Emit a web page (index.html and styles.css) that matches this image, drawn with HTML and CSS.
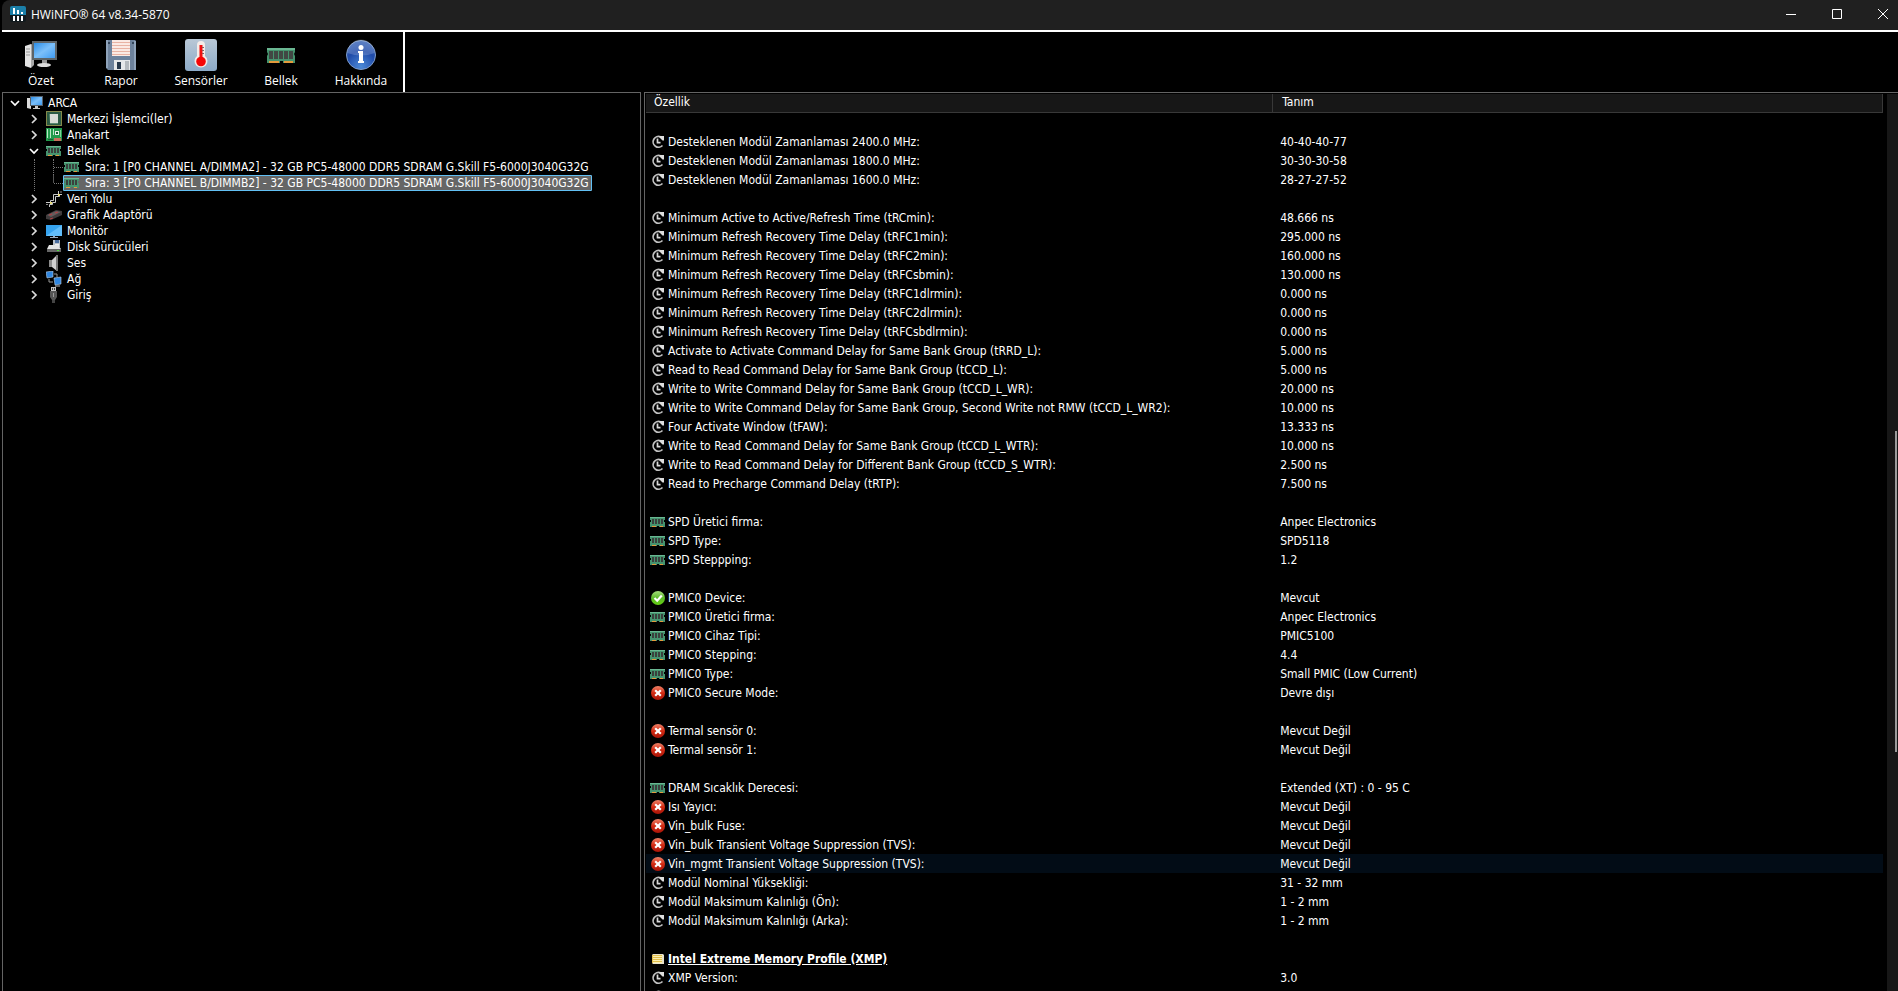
FILE: index.html
```
<!DOCTYPE html>
<html lang="tr">

<head>
    <meta charset="UTF-8">
    <meta name="viewport" content="width=device-width, initial-scale=1.0">
    <title>HWiNFO® 64 v8.34-5870</title>
    <link rel="stylesheet" href="styles.css">
</head>

<body>
    <!-- shared icons -->
    <svg class="sprite" aria-hidden="true">
        <defs>
            <linearGradient id="screen" x1="0" y1="0" x2="1" y2="1">
                <stop offset="0" stop-color="#2b8ee8" />
                <stop offset="0.5" stop-color="#7cc0fa" />
                <stop offset="1" stop-color="#3f9cf2" />
            </linearGradient>
            <linearGradient id="steel" x1="0" y1="0" x2="0" y2="1">
                <stop offset="0" stop-color="#b9c8d6" />
                <stop offset="1" stop-color="#8dabc8" />
            </linearGradient>
            <radialGradient id="blue" cx="0.5" cy="0.9" r="0.9">
                <stop offset="0" stop-color="#4c8ad8" />
                <stop offset="0.6" stop-color="#1f4aa8" />
                <stop offset="1" stop-color="#3a66b8" />
            </radialGradient>
            <linearGradient id="green" x1="0" y1="0" x2="0" y2="1">
                <stop offset="0" stop-color="#a5dc7c" />
                <stop offset="0.5" stop-color="#5cb82a" />
                <stop offset="1" stop-color="#63d010" />
            </linearGradient>
            <linearGradient id="red" x1="0" y1="0" x2="0" y2="1">
                <stop offset="0" stop-color="#ee8268" />
                <stop offset="0.5" stop-color="#d32a12" />
                <stop offset="1" stop-color="#a81408" />
            </linearGradient>
        </defs>
        <symbol id="i-pc" viewBox="0 0 32 32">
            <path d="M0 7l6-2v24l-6-2z" fill="#e4e4e4" />
            <path d="M6 5l3 1v20l-3 3z" fill="#a8a8a8" />
            <path d="M1 10h4M1 13h4M1 16h4" stroke="#999" />
            <path d="M7 2h25v19H7z" fill="#5d6468" />
            <path d="M9 4h21v15H9z" fill="url(#screen)" />
            <path d="M17 21h5v4h-5z" fill="#999" />
            <ellipse cx="19" cy="26" rx="7" ry="2" fill="#dcdcdc" />
        </symbol>
        <symbol id="i-pc-small" viewBox="0 0 16 16">
            <path d="M0 3h4v11l-4-1z" fill="#dcdcdc" />
            <path d="M3 1h13v10H3z" fill="#56606a" />
            <path d="M4 2h11v8H4z" fill="url(#screen)" />
            <path d="M8 11h3v2h2v1H6v-1h2z" fill="#c8c8c8" />
        </symbol>
        <symbol id="i-cpu" viewBox="0 0 16 16">
            <path d="M0 0h16v15H0z" fill="#2b5a44" />
            <path d="M.5 .5h15v14H.5z" fill="none" stroke="#e0b850" stroke-dasharray="1 1" />
            <path d="M4 3h8v9H4z" fill="#d8dcd6" />
            <path d="M3 3h1v10h8v-1H4z" fill="#5b8a70" />
        </symbol>
        <symbol id="i-board" viewBox="0 0 16 16">
            <path d="M0 1h16v13H0z" fill="#239a4c" />
            <path d="M1 2h1v9H1zM4 2h1v9H4zM7 2h1v6H7z" fill="#b8e6c4" />
            <path d="M9 4h4v4H9z" fill="#e4ece4" />
            <path d="M10 5h2v2h-2zM2 12h5v1H2z" fill="#1b5e34" />
            <path d="M14 3h1v7h-1z" fill="#7bd898" />
            <path d="M8 11h7v3H8z" fill="#c9705c" />
        </symbol>
        <symbol id="i-ram" viewBox="0 0 32 22">
            <path d="M2 4h28v4l-1 2 1 2v7H18v-2h-3v2H2v-7l1-2-1-2z" fill="#45936e" />
            <path d="M2 4h28v2H2z" fill="#6ab792" />
            <path d="M4 7h4v8H4zM9 7h4v8H9zM14 7h4v8h-4zM19 7h4v8h-4zM24 7h4v8h-4z" fill="#414744" />
            <path d="M4 17h10v2H4zM19 17h9v2h-9z" fill="#e39a3c" />
        </symbol>
        <symbol id="i-ram-small" viewBox="0 0 16 16">
            <path d="M0 3h15v3H14v2h1v5H9v-1H7v1H0V8h1V6H0z" fill="#45936e" />
            <path d="M0 3h15v1H0z" fill="#6ab792" />
            <path d="M2 5h2v5H2zM5 5h2v5H5zM8 5h2v5H8zM11 5h2v5h-2z" fill="#3a403d" />
            <path d="M2 12h4v1H2zM10 12h3v1h-3z" fill="#e39a3c" />
        </symbol>
        <symbol id="i-bus" viewBox="0 0 16 16">
            <path d="M0 11.500h4.500V9.500h3v-6h5V0M3.500 16v-2.500h3v-2h3v-6h4v-2H16" fill="none" stroke="#c9c9c9" />
            <path d="M0 13.500h2M15 0v2" stroke="#888" />
            <path d="M4 11h2v2H4zM12 3h2v2h-2z" fill="#e8dc7c" />
        </symbol>
        <symbol id="i-gpu" viewBox="0 0 16 16">
            <path d="M0 8l10-5 6 1v4L5 13l-5-1z" fill="#3e3a3b" />
            <path d="M1 8l9-4 5 1-10 5z" fill="#655b5c" />
            <path d="M3 8l3-1M9 6l3-1M4 12l3-1" stroke="#b53c40" />
        </symbol>
        <symbol id="i-monitor" viewBox="0 0 16 16">
            <path d="M0 2h16v11H0z" fill="#36a4f0" />
            <path d="M0 13L16 2v11z" fill="#62bdf9" />
            <path d="M7 13h2v1h3v1H4v-1h3z" fill="#9ab" />
        </symbol>
        <symbol id="i-disk" viewBox="0 0 16 16">
            <path d="M7 1h7v7H7z" fill="#b9c0c8" />
            <path d="M9 1h4v3H9z" fill="#4b6ea0" />
            <path d="M9 5h4v3H9z" fill="#eee" />
            <path d="M3 6h9l3 4H1z" fill="#e4e4e4" />
            <path d="M1 10h14v3H1z" fill="#666" />
            <path d="M11 11h2v1h-2z" fill="#4be03c" />
        </symbol>
        <symbol id="i-sound" viewBox="0 0 16 16">
            <path d="M3 5h3v7H3z" fill="#8d8d8d" />
            <path d="M6 5l5-5v16l-5-4z" fill="#cfcfcf" />
            <path d="M10 0h2v16h-2z" fill="#777" />
        </symbol>
        <symbol id="i-net" viewBox="0 0 16 16">
            <path d="M0 1l7-1v6L1 7z" fill="#2f86e0" stroke="#b8cfe4" stroke-width=".6" />
            <path d="M3 8v3h4M8 3h3v3" fill="none" stroke="#999" />
            <path d="M8 7l7-1v7l-6 1z" fill="#2f86e0" stroke="#b8cfe4" stroke-width=".6" />
            <path d="M9 15h5" stroke="#bbb" />
        </symbol>
        <symbol id="i-input" viewBox="0 0 16 16">
            <path d="M5 0h5v4H5z" fill="#c4c4c4" />
            <path d="M6 1h1v2H6zM8 1h1v2H8z" fill="#444" />
            <path d="M4 4h7v6l-2 3H6l-2-3z" fill="#555" />
            <path d="M7 6h1v4H7z" fill="#999" />
            <path d="M6 13h3v3H6z" fill="#444" />
        </symbol>
        <symbol id="i-clock" viewBox="0 0 16 16">
            <path d="M10.500 2.800A5.400 5.400 0 1 0 12.500 11.500" fill="none" stroke="#c2c2c2" stroke-width="1.700" />
            <path d="M9.500 2H14v4.500h-1.500L9.500 3.500z" fill="#dedede" />
            <path d="M7.500 4.500v4.200h3" fill="none" stroke="#d8d8d8" stroke-width="1.700" />
        </symbol>
        <symbol id="i-ok" viewBox="0 0 16 16">
            <circle cx="8" cy="8" r="7" fill="url(#green)" />
            <path d="M4.500 8l2.700 2.700L11.800 5.500" fill="none" stroke="#fff" stroke-width="2.200" />
        </symbol>
        <symbol id="i-no" viewBox="0 0 16 16">
            <circle cx="8" cy="8" r="7" fill="url(#red)" />
            <path d="M5.200 5.200l5.600 5.600M10.800 5.200l-5.600 5.600" stroke="#fff" stroke-width="2.200" />
        </symbol>
        <symbol id="i-note" viewBox="0 0 16 16">
            <path d="M3 3h10l1 1v9H3l-1-1V4z" fill="#e8e2cc" />
            <path d="M2 4h10v8H2z" fill="#e2bf4c" />
            <path d="M3 5.500h9M3 7.500h9M3 9.500h9M3 11.500h9" stroke="#fbf0b4" />
        </symbol>
        <symbol id="i-open" viewBox="0 0 10 10">
            <path d="M1 3l4 4 4-4" fill="none" stroke="#fff" stroke-width="1.700" />
        </symbol>
        <symbol id="i-closed" viewBox="0 0 10 10">
            <path d="M3 1l4 4-4 4" fill="none" stroke="#dcdcdc" stroke-width="1.700" />
        </symbol>
    </svg>

    <div class="window">
        <header class="titlebar">
            <svg class="logo" viewBox="0 0 16 16" aria-hidden="true">
                <path d="M2 0h12q2 0 2 2v7H0V2q0-2 2-2z" fill="#1b7fa8" />
                <path d="M0 9h16v5q0 2-2 2H2q-2 0-2-2z" fill="#10191d" />
                <path d="M3 2h2v6H3zM7 4h2v4H7zM11 6h2v2h-2z" fill="#fff" />
                <path d="M3 10h2v5H3zM7 10h2v5H7zM11 10h2v5h-2z" fill="#fff" />
            </svg>
            <h1>HWiNFO® 64 v8.34-5870</h1>
            <div class="controls">
                <button type="button" aria-label="Simge durumuna küçült">
                    <svg viewBox="0 0 10 10"><path d="M0 5.500h10" /></svg>
                </button>
                <button type="button" aria-label="Ekranı kapla">
                    <svg viewBox="0 0 10 10"><path d="M.5 .5h9v9h-9z" /></svg>
                </button>
                <button type="button" aria-label="Kapat">
                    <svg viewBox="0 0 10 10"><path d="M0 0l10 10M10 0L0 10" /></svg>
                </button>
            </div>
        </header>

        <nav class="toolbar">
            <button type="button">
                <svg><use href="#i-pc" /></svg>
                <span>Özet</span>
            </button>
            <button type="button">
                <svg viewBox="0 0 32 32">
                    <path d="M1 1h29l1 1v29H3l-2-2z" fill="#6d829c" />
                    <path d="M1 1h2v28H1zM29 2h2v29h-2z" fill="#8fa3ba" />
                    <path d="M7 1h18v16H7z" fill="#fbeae4" />
                    <path d="M7 3.500h18M7 6.500h18M7 9.500h18M7 12.500h18M7 15.500h18" stroke="#e9b3a4" />
                    <path d="M9 21h16v10H9z" fill="#e6e8ea" />
                    <path d="M12 23h4v7h-4z" fill="#27384c" />
                    <path d="M20 22h4v9h-4z" fill="#b4b9be" />
                    <path d="M3 3h2v2H3zM27 3h2v2h-2z" fill="#33455a" />
                </svg>
                <span>Rapor</span>
            </button>
            <button type="button">
                <svg viewBox="0 0 32 32">
                    <rect width="32" height="32" rx="3" fill="url(#steel)" />
                    <path d="M12 6a4 4 0 0 1 8 0v11a6.500 6.500 0 1 1-8 0z" fill="#f4ece8" />
                    <path d="M14.500 6h3v13h-3z" fill="#f01010" />
                    <circle cx="16" cy="22.500" r="4.800" fill="#f60606" />
                    <path d="M17 8.500h2M17 11.500h2M17 14.500h2" stroke="#8a5a5a" />
                </svg>
                <span>Sensörler</span>
            </button>
            <button type="button">
                <svg><use href="#i-ram" /></svg>
                <span>Bellek</span>
            </button>
            <button type="button">
                <svg viewBox="0 0 32 32">
                    <circle cx="16" cy="16" r="14.500" fill="url(#blue)" stroke="#7f9cc8" />
                    <path d="M2.500 14a13.500 13.500 0 0 1 27 0q-13 5-27 0z" fill="#fff" opacity=".18" />
                    <circle cx="16" cy="8.500" r="2.500" fill="#fff" />
                    <path d="M13 12h5v10h1v2h-6v-2h1v-8h-1z" fill="#fff" />
                </svg>
                <span>Hakkında</span>
            </button>
        </nav>

        <main class="panes">
            <section class="tree" aria-label="Donanım">
                <div class="node root"><svg class="arrow"><use href="#i-open" /></svg><svg class="icon"><use href="#i-pc-small" /></svg>ARCA</div>
                <div class="node"><svg class="arrow"><use href="#i-closed" /></svg><svg class="icon"><use href="#i-cpu" /></svg>Merkezi İşlemci(ler)</div>
                <div class="node"><svg class="arrow"><use href="#i-closed" /></svg><svg class="icon"><use href="#i-board" /></svg>Anakart</div>
                <div class="node"><svg class="arrow"><use href="#i-open" /></svg><svg class="icon"><use href="#i-ram-small" /></svg>Bellek</div>
                <div class="children">
                    <div class="leaf"><span class="item"><svg class="icon"><use href="#i-ram-small" /></svg>Sıra: 1 [P0 CHANNEL A/DIMMA2] - 32 GB PC5-48000 DDR5 SDRAM G.Skill F5-6000J3040G32G</span></div>
                    <div class="leaf"><span class="item selected"><svg class="icon"><use href="#i-ram-small" /></svg>Sıra: 3 [P0 CHANNEL B/DIMMB2] - 32 GB PC5-48000 DDR5 SDRAM G.Skill F5-6000J3040G32G</span></div>
                </div>
                <div class="node"><svg class="arrow"><use href="#i-closed" /></svg><svg class="icon"><use href="#i-bus" /></svg>Veri Yolu</div>
                <div class="node"><svg class="arrow"><use href="#i-closed" /></svg><svg class="icon"><use href="#i-gpu" /></svg>Grafik Adaptörü</div>
                <div class="node"><svg class="arrow"><use href="#i-closed" /></svg><svg class="icon"><use href="#i-monitor" /></svg>Monitör</div>
                <div class="node"><svg class="arrow"><use href="#i-closed" /></svg><svg class="icon"><use href="#i-disk" /></svg>Disk Sürücüleri</div>
                <div class="node"><svg class="arrow"><use href="#i-closed" /></svg><svg class="icon"><use href="#i-sound" /></svg>Ses</div>
                <div class="node"><svg class="arrow"><use href="#i-closed" /></svg><svg class="icon"><use href="#i-net" /></svg>Ağ</div>
                <div class="node"><svg class="arrow"><use href="#i-closed" /></svg><svg class="icon"><use href="#i-input" /></svg>Giriş</div>
            </section>

            <section class="details">
                <div class="scroller">
                    <table>
                        <thead>
                            <tr><th class="name">Özellik</th><th>Tanım</th></tr>
                        </thead>
                        <tbody id="rows"></tbody>
                    </table>
                </div>
                <div class="scrollbar">
                    <div class="thumb"></div>
                </div>
            </section>
        </main>
    </div>

    <script>
        // [icon, feature, description], an empty array is a spacer row
        const rows = [
            [],
            ["clock", "Desteklenen Modül Zamanlaması 2400.0 MHz:", "40-40-40-77"],
            ["clock", "Desteklenen Modül Zamanlaması 1800.0 MHz:", "30-30-30-58"],
            ["clock", "Desteklenen Modül Zamanlaması 1600.0 MHz:", "28-27-27-52"],
            [],
            ["clock", "Minimum Active to Active/Refresh Time (tRCmin):", "48.666 ns"],
            ["clock", "Minimum Refresh Recovery Time Delay (tRFC1min):", "295.000 ns"],
            ["clock", "Minimum Refresh Recovery Time Delay (tRFC2min):", "160.000 ns"],
            ["clock", "Minimum Refresh Recovery Time Delay (tRFCsbmin):", "130.000 ns"],
            ["clock", "Minimum Refresh Recovery Time Delay (tRFC1dlrmin):", "0.000 ns"],
            ["clock", "Minimum Refresh Recovery Time Delay (tRFC2dlrmin):", "0.000 ns"],
            ["clock", "Minimum Refresh Recovery Time Delay (tRFCsbdlrmin):", "0.000 ns"],
            ["clock", "Activate to Activate Command Delay for Same Bank Group (tRRD_L):", "5.000 ns"],
            ["clock", "Read to Read Command Delay for Same Bank Group (tCCD_L):", "5.000 ns"],
            ["clock", "Write to Write Command Delay for Same Bank Group (tCCD_L_WR):", "20.000 ns"],
            ["clock", "Write to Write Command Delay for Same Bank Group, Second Write not RMW (tCCD_L_WR2):", "10.000 ns"],
            ["clock", "Four Activate Window (tFAW):", "13.333 ns"],
            ["clock", "Write to Read Command Delay for Same Bank Group (tCCD_L_WTR):", "10.000 ns"],
            ["clock", "Write to Read Command Delay for Different Bank Group (tCCD_S_WTR):", "2.500 ns"],
            ["clock", "Read to Precharge Command Delay (tRTP):", "7.500 ns"],
            [],
            ["ram-small", "SPD Üretici firma:", "Anpec Electronics"],
            ["ram-small", "SPD Type:", "SPD5118"],
            ["ram-small", "SPD Steppping:", "1.2"],
            [],
            ["ok", "PMIC0 Device:", "Mevcut"],
            ["ram-small", "PMIC0 Üretici firma:", "Anpec Electronics"],
            ["ram-small", "PMIC0 Cihaz Tipi:", "PMIC5100"],
            ["ram-small", "PMIC0 Stepping:", "4.4"],
            ["ram-small", "PMIC0 Type:", "Small PMIC (Low Current)"],
            ["no", "PMIC0 Secure Mode:", "Devre dışı"],
            [],
            ["no", "Termal sensör 0:", "Mevcut Değil"],
            ["no", "Termal sensör 1:", "Mevcut Değil"],
            [],
            ["ram-small", "DRAM Sıcaklık Derecesi:", "Extended (XT) : 0 - 95 C"],
            ["no", "Isı Yayıcı:", "Mevcut Değil"],
            ["no", "Vin_bulk Fuse:", "Mevcut Değil"],
            ["no", "Vin_bulk Transient Voltage Suppression (TVS):", "Mevcut Değil"],
            ["no", "Vin_mgmt Transient Voltage Suppression (TVS):", "Mevcut Değil", "hover"],
            ["clock", "Modül Nominal Yüksekliği:", "31 - 32 mm"],
            ["clock", "Modül Maksimum Kalınlığı (Ön):", "1 - 2 mm"],
            ["clock", "Modül Maksimum Kalınlığı (Arka):", "1 - 2 mm"],
            [],
            ["note", "Intel Extreme Memory Profile (XMP)", "", "group"],
            ["clock", "XMP Version:", "3.0"],
            ["clock", "", ""]
        ];

        const body = document.getElementById("rows");
        for (const [icon, name, value, type] of rows) {
            const tr = body.insertRow();
            if (type) {
                tr.className = type;
            }
            const first = tr.insertCell();
            const second = tr.insertCell();
            if (icon) {
                first.innerHTML = `<div class="feature"><svg class="icon"><use href="#i-${icon}" /></svg><span>${name}</span></div>`;
                second.textContent = value;
            }
        }
    </script>
</body>

</html>
```
FILE: styles.css
```
* {
    box-sizing: border-box;
}

body {
    margin: 0;
    background-color: #000;
    color: #fff;
    font-family: "DejaVu Sans Condensed", "Noto Sans", sans-serif;
    font-size: 12px;
}

button {
    padding: 0;
    border: none;
    background: none;
    color: inherit;
    font: inherit;
}

svg {
    display: block;
    flex: none;
}

.sprite {
    position: absolute;
    width: 0;
    height: 0;
}

.window {
    display: flex;
    flex-direction: column;
    height: 100vh;
    padding-left: 2px;
    overflow: hidden;
}

/* title bar */
.titlebar {
    display: flex;
    align-items: center;
    flex: none;
    height: 32px;
    padding: 0 0 2px 8px;
    background-color: #202020;
    border-bottom: 2px solid #fff;
    border-top-left-radius: 8px;
}

.logo {
    width: 16px;
    height: 16px;
}

h1 {
    flex: 1;
    margin: 0 0 0 5px;
    font-family: "Open Sans", "Noto Sans", sans-serif;
    font-size: 12px;
    font-weight: normal;
}

.controls {
    display: flex;
    gap: 16px;
}

.controls button {
    display: flex;
    align-items: center;
    justify-content: center;
    width: 30px;
    height: 28px;
}

.controls svg {
    width: 10px;
    height: 10px;
    fill: none;
    stroke: #fff;
}

/* toolbar */
.toolbar {
    display: flex;
    flex: none;
    align-self: flex-start;
    height: 60px;
    padding-right: 1px;
    border-right: 2px solid #fff;
}

.toolbar button {
    display: flex;
    flex-direction: column;
    align-items: center;
    gap: 2px;
    width: 80px;
    padding: 7px 2px 0 0;
    font-family: "Open Sans", "Noto Sans", sans-serif;
    line-height: 16px;
}

.toolbar svg {
    width: 32px;
    height: 32px;
}

/* panes */
.panes {
    display: grid;
    grid-template-columns: 639fr 1254fr;
    gap: 3px;
    flex: 1;
    min-height: 0;
}

.tree,
.details {
    border: 1px solid #646464;
    border-bottom: none;
    overflow: hidden;
}

.tree {
    padding: 2px 0 0 7px;
}

.node,
.leaf {
    display: flex;
    align-items: center;
    height: 16px;
    white-space: nowrap;
}

.node {
    padding-left: 19px;
}

.root {
    padding-left: 0;
}

.arrow {
    width: 10px;
    height: 10px;
}

.node .icon {
    margin: 0 5px 0 7px;
}

.icon {
    width: 16px;
    height: 16px;
}

.children {
    margin-left: 24px;
    border-left: 1px dotted #777;
}

.leaf {
    margin-left: 18px;
    border-left: 1px dotted #777;
}

.leaf::before {
    content: "";
    width: 9px;
    border-top: 1px dotted #777;
}

.leaf:last-child {
    border-left-color: transparent;
    border-image: linear-gradient(#555 50%, transparent 50%) 1;
}

.item {
    display: flex;
    align-items: center;
    gap: 5px;
    height: 16px;
    padding: 0 3px 0 1px;
}

.selected {
    background-color: #666;
    outline: 1px solid #62c0f4;
    outline-offset: -1px;
    border-radius: 1px;
}

/* feature table */
.details {
    display: flex;
    border-right: none;
    padding: 1px 0 0 1px;
}

.scroller {
    flex: 1;
    overflow: hidden;
}

table {
    width: 100%;
    border-collapse: separate;
    border-spacing: 0;
    table-layout: fixed;
}

tr {
    height: 19px;
}

th,
td {
    padding: 0;
    text-align: left;
    white-space: nowrap;
}

th {
    height: 19px;
    padding: 0 0 2px 9px;
    background-color: #171717;
    border-right: 1px solid #383838;
    border-bottom: 1px solid #383838;
    font-weight: normal;
}

.name {
    width: 50.700%;
    padding-left: 8px;
}

td + td {
    padding-left: 7px;
}

.feature {
    display: flex;
    align-items: center;
    gap: 2px;
    padding-left: 4px;
}

.hover {
    background-color: #020c16;
}

.group {
    font-weight: bold;
    text-decoration: underline;
}

.scrollbar {
    flex: none;
    width: 15px;
    padding: 337px 1px 0 0;
    border-left: 4px solid #000;
    background-color: #171717;
}

.thumb {
    width: 2px;
    height: 321px;
    margin-left: auto;
    background-color: #9a9a9a;
}
```
